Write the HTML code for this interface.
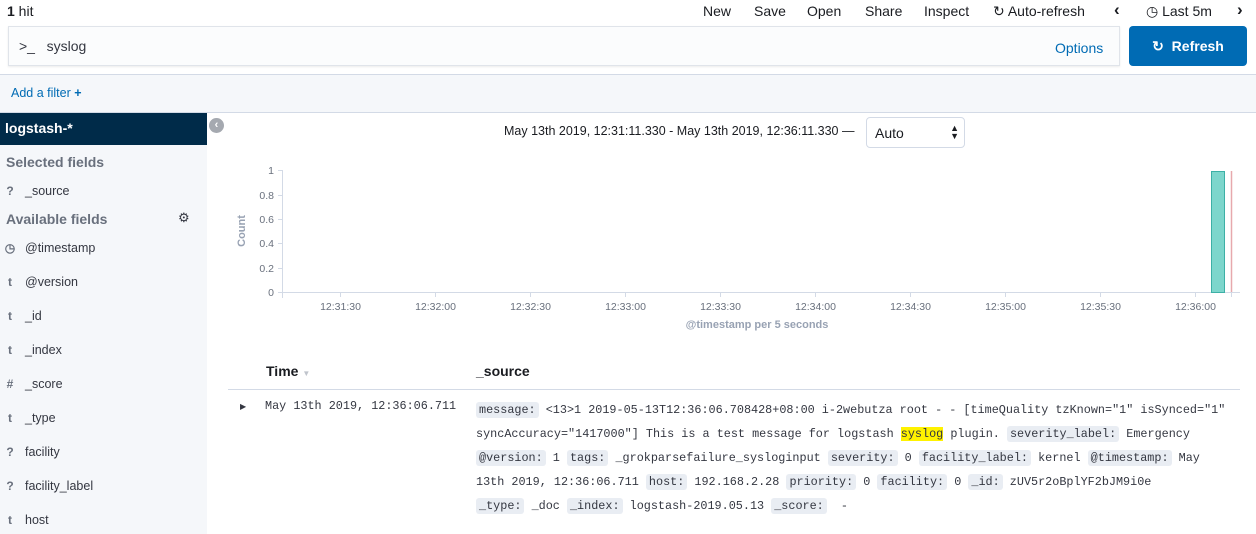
<!DOCTYPE html>
<html><head><meta charset="utf-8"><style>
*{margin:0;padding:0;box-sizing:border-box}
body{width:1256px;height:534px;overflow:hidden;background:#fff;font-family:"Liberation Sans",sans-serif;color:#343741;position:relative}
.a{position:absolute;white-space:nowrap}
.nav{font-size:14px;color:#1a1c21;top:3px}
.fl{font-size:12.5px;color:#343741}
.fi{font-size:12px;color:#69707d;width:12px;text-align:center;font-weight:bold}
.mono{font-family:"Liberation Mono",monospace;font-size:11.8px;color:#343741}
.k{background:#e9edf3;padding:1px 3px;border-radius:3px}
</style></head><body>
<div class="a" style="left:7px;top:3px;font-size:14px;color:#1a1c21"><b>1</b> hit</div>
<div class="a nav" style="left:703px">New</div>
<div class="a nav" style="left:754px">Save</div>
<div class="a nav" style="left:807px">Open</div>
<div class="a nav" style="left:865px">Share</div>
<div class="a nav" style="left:924px">Inspect</div>
<div class="a nav" style="left:993px">&#x21bb; Auto-refresh</div>
<div class="a nav" style="left:1114px;font-weight:bold;font-size:17px;top:0">&#x2039;</div>
<div class="a nav" style="left:1146px">&#x25F7; Last 5m</div>
<div class="a nav" style="left:1237px;font-weight:bold;font-size:17px;top:0">&#x203A;</div>
<div class="a" style="left:8px;top:26px;width:1112px;height:40px;border:1px solid #e0e4ea;background:#fbfcfd;box-shadow:0 1px 2px rgba(0,0,0,.08)"></div>
<div class="a" style="left:19px;top:38px;font-size:14px;color:#343741">&gt;_&nbsp;&nbsp;&nbsp;syslog</div>
<div class="a" style="left:1055px;top:40px;font-size:14px;color:#006bb4">Options</div>
<div class="a" style="left:1129px;top:26px;width:118px;height:40px;background:#006bb4;border-radius:4px;color:#fff;font-size:14px;font-weight:bold;line-height:40px;text-align:center">&#x21bb;&nbsp; Refresh</div>
<div class="a" style="left:0;top:74px;width:1256px;height:39px;background:#f5f7fa;border-top:1px solid #d3dae6;border-bottom:1px solid #d3dae6"></div>
<div class="a" style="left:11px;top:86px;font-size:12.5px;color:#006bb4">Add a filter <b>+</b></div>
<div class="a" style="left:0;top:113px;width:207px;height:421px;background:#f5f7fa"></div>
<div class="a" style="left:0;top:113px;width:207px;height:32px;background:#002b49;color:#fff;font-weight:bold;font-size:14px;padding:7px 5px">logstash-*</div>
<div class="a" style="left:6px;top:154px;font-size:14px;font-weight:bold;color:#69707d">Selected fields</div>
<div class="a fi" style="left:4px;top:184px">?</div><div class="a fl" style="left:25px;top:184px">_source</div>
<div class="a" style="left:6px;top:211px;font-size:14px;font-weight:bold;color:#69707d">Available fields</div>
<div class="a" style="left:178px;top:210px;font-size:13px;color:#343741">&#x2699;</div>
<div class="a fi" style="left:4px;top:241px">&#x25F7;</div><div class="a fl" style="left:25px;top:241px">@timestamp</div>
<div class="a fi" style="left:4px;top:275px">t</div><div class="a fl" style="left:25px;top:275px">@version</div>
<div class="a fi" style="left:4px;top:309px">t</div><div class="a fl" style="left:25px;top:309px">_id</div>
<div class="a fi" style="left:4px;top:343px">t</div><div class="a fl" style="left:25px;top:343px">_index</div>
<div class="a fi" style="left:4px;top:377px">#</div><div class="a fl" style="left:25px;top:377px">_score</div>
<div class="a fi" style="left:4px;top:411px">t</div><div class="a fl" style="left:25px;top:411px">_type</div>
<div class="a fi" style="left:4px;top:445px">?</div><div class="a fl" style="left:25px;top:445px">facility</div>
<div class="a fi" style="left:4px;top:479px">?</div><div class="a fl" style="left:25px;top:479px">facility_label</div>
<div class="a fi" style="left:4px;top:513px">t</div><div class="a fl" style="left:25px;top:513px">host</div>
<div class="a" style="left:209px;top:118px;width:15px;height:15px;border-radius:50%;background:#a5a9b0;color:#fff;font-size:11px;line-height:14px;text-align:center;font-weight:bold">&#x2039;</div>
<div class="a" style="left:504px;top:124px;font-size:12.5px;color:#1a1c21">May 13th 2019, 12:31:11.330 - May 13th 2019, 12:36:11.330 —</div>
<div class="a" style="left:866px;top:117px;width:99px;height:31px;border:1px solid #d3dae6;border-radius:4px;font-size:14px;padding:7px 8px;color:#1a1c21">Auto<span style="position:absolute;right:5px;top:6px;font-size:9px;line-height:8px">&#x25B2;<br>&#x25BC;</span></div>
<svg class="a" style="left:0;top:0" width="1256" height="534">
<g stroke="#d3dae6" stroke-width="1">
<line x1="282.5" y1="170" x2="282.5" y2="298"/><line x1="282" y1="292.5" x2="1240" y2="292.5"/>
<line x1="278" y1="170.5" x2="282" y2="170.5"/><line x1="278" y1="195.5" x2="282" y2="195.5"/><line x1="278" y1="219.5" x2="282" y2="219.5"/><line x1="278" y1="243.5" x2="282" y2="243.5"/><line x1="278" y1="268.5" x2="282" y2="268.5"/><line x1="278" y1="292.5" x2="282" y2="292.5"/>
<line x1="340.5" y1="292" x2="340.5" y2="297"/><line x1="435.5" y1="292" x2="435.5" y2="297"/><line x1="530.5" y1="292" x2="530.5" y2="297"/><line x1="625.5" y1="292" x2="625.5" y2="297"/><line x1="720.5" y1="292" x2="720.5" y2="297"/><line x1="815.5" y1="292" x2="815.5" y2="297"/><line x1="910.5" y1="292" x2="910.5" y2="297"/><line x1="1005.5" y1="292" x2="1005.5" y2="297"/><line x1="1100.5" y1="292" x2="1100.5" y2="297"/><line x1="1195.5" y1="292" x2="1195.5" y2="297"/><line x1="1231.5" y1="292" x2="1231.5" y2="297"/>
</g>
<rect x="1211.5" y="171.5" width="13" height="121" fill="#7dd6cc" stroke="#3db0a6"/>
<line x1="1231.5" y1="171" x2="1231.5" y2="292" stroke="#e7a9ad" stroke-width="1.5"/>
<g font-family="Liberation Sans,sans-serif" font-size="10.5" fill="#69707d" text-anchor="end">
<text x="274" y="174">1</text><text x="274" y="199">0.8</text><text x="274" y="223">0.6</text><text x="274" y="247">0.4</text><text x="274" y="272">0.2</text><text x="274" y="296">0</text>
</g>
<g font-family="Liberation Sans,sans-serif" font-size="10.5" fill="#69707d" text-anchor="middle">
<text x="340.5" y="310">12:31:30</text><text x="435.5" y="310">12:32:00</text><text x="530.5" y="310">12:32:30</text><text x="625.5" y="310">12:33:00</text><text x="720.5" y="310">12:33:30</text><text x="815.5" y="310">12:34:00</text><text x="910.5" y="310">12:34:30</text><text x="1005.5" y="310">12:35:00</text><text x="1100.5" y="310">12:35:30</text><text x="1195.5" y="310">12:36:00</text>
<text x="757" y="328" font-weight="bold" font-size="11" fill="#98a2b3">@timestamp per 5 seconds</text>
<text transform="translate(245,231) rotate(-90)" font-weight="bold" font-size="11" fill="#98a2b3">Count</text>
</g>
<line x1="228" y1="389.5" x2="1240" y2="389.5" stroke="#d3dae6"/>
</svg>
<div class="a" style="left:266px;top:363px;font-size:14px;font-weight:bold;color:#1a1c21">Time <span style="font-size:8px;color:#c0c4cc">&#x25BC;</span></div>
<div class="a" style="left:476px;top:363px;font-size:14px;font-weight:bold;color:#1a1c21">_source</div>
<div class="a" style="left:240px;top:402px;font-size:8px;color:#343741">&#x25B6;</div>
<div class="a mono" style="left:265px;top:399px">May 13th 2019, 12:36:06.711</div>
<div class="a mono" style="left:476px;top:398px;line-height:24px"><span class="k">message:</span> &lt;13&gt;1 2019-05-13T12:36:06.708428+08:00 i-2webutza root - - [timeQuality tzKnown="1" isSynced="1"<br>syncAccuracy="1417000"] This is a test message for logstash <span style="background:#fff200">syslog</span> plugin. <span class="k">severity_label:</span> Emergency<br><span class="k">@version:</span> 1 <span class="k">tags:</span> _grokparsefailure_sysloginput <span class="k">severity:</span> 0 <span class="k">facility_label:</span> kernel <span class="k">@timestamp:</span> May<br>13th 2019, 12:36:06.711 <span class="k">host:</span> 192.168.2.28 <span class="k">priority:</span> 0 <span class="k">facility:</span> 0 <span class="k">_id:</span> zUV5r2oBplYF2bJM9i0e<br><span class="k">_type:</span> _doc <span class="k">_index:</span> logstash-2019.05.13 <span class="k">_score:</span> &nbsp;-</div>
</body></html>
